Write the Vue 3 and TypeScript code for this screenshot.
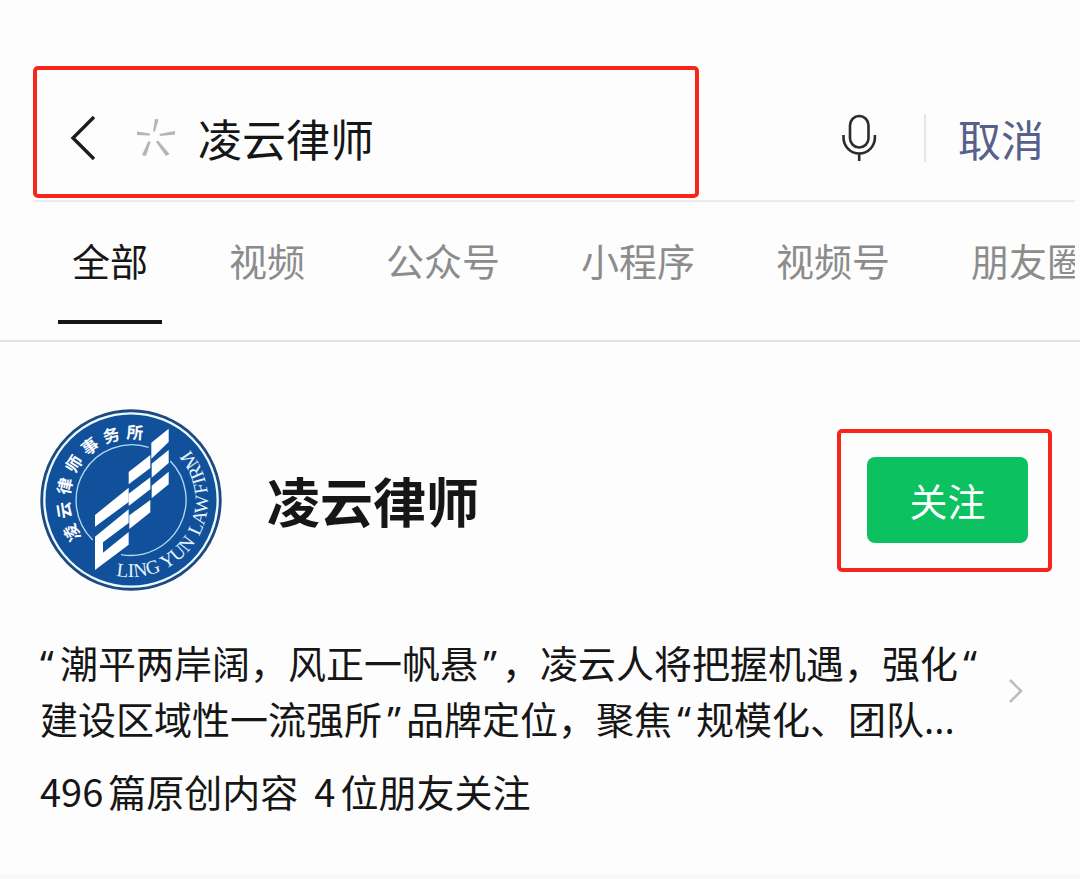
<script setup lang="ts">
import { ref } from 'vue'

const query = ref('凌云律师')
const tabs = ['全部', '视频', '公众号', '小程序', '视频号', '朋友圈']
const active = ref(0)

const sealChars = [...'凌云律师事务所'].map((char, i) => ({
  char,
  angle: -119 + i * 20.4,
}))

const sealWords = [
  { word: 'LING', offset: 0 },
  { word: 'YUN', offset: 150 },
  { word: 'LAW', offset: 294 },
  { word: 'FIRM', offset: 430 },
]
</script>

<template>
  <main class="page" lang="zh-CN">
    <header class="search-bar">
      <form class="search-box" @submit.prevent>
        <button class="icon-button" type="button" aria-label="返回">
          <svg width="28" height="46" viewBox="0 0 28 46" fill="none" stroke="#1c1c1c" stroke-width="3.4">
            <path d="M25 2 4 23l21 21" />
          </svg>
        </button>
        <svg class="spark" width="40" height="40" viewBox="0 0 40 40" fill="#b4b4b4" aria-hidden="true">
          <path d="M19 1l3.500 .5-3.500 12h-2z" />
          <path d="M1 13.500l13 2v2L1 17z" />
          <path d="M39 13v3.500l-15 1.500-.5-2z" />
          <path d="M12.500 23l2 1L10 38l-4-1z" />
          <path d="M20 24l2-1.500L33.500 36 30 38z" />
        </svg>
        <input v-model="query" class="query" type="text" aria-label="搜索" />
      </form>
      <div class="actions">
        <button class="icon-button" type="button" aria-label="语音输入">
          <svg width="36" height="48" viewBox="0 0 36 48" fill="none" stroke="#2b2b2b" stroke-width="2.600">
            <rect x="9" y="2" width="18.500" height="31.500" rx="9.250" />
            <path d="M2.500 21v2.500a15.700 16 0 0 0 31.400 0V21M18.200 39.500V47" />
          </svg>
        </button>
        <span class="divider"></span>
        <button class="cancel" type="button">取消</button>
      </div>
    </header>

    <nav class="tabs">
      <button
        v-for="(tab, i) in tabs"
        :key="tab"
        type="button"
        class="tab"
        :class="{ active: active === i }"
        @click="active = i"
      >{{ tab }}</button>
    </nav>

    <article class="account">
      <div class="profile">
        <svg class="seal" width="182" height="182" viewBox="29 27 546 546" role="img" aria-label="凌云律师事务所">
          <circle cx="302" cy="300" r="272" fill="#1d4a80" />
          <circle cx="302" cy="300" r="260" fill="#11509b" stroke="#eafaff" stroke-width="7" />
          <path d="M355 142A167 167 0 0 0 187 420M420 183A167 167 0 0 1 272 464" fill="none" stroke="#b4dcf0" stroke-width="4" />
          <g fill="#fff">
            <path d="M363 128 415 86V126L363 176Z" />
            <path d="M295 216 360 165V204L295 253Z" />
            <path d="M364 191 415 150V189L364 233Z" />
            <path d="M295 281 360 232V268L295 318Z" />
            <path d="M364 257 415 215V253L364 295Z" />
            <path d="M194 345 295 263V306L194 380Z" />
            <path d="M297 346 360 300V337L297 387Z" />
            <path d="M194 410 295 328V369L218 427V458L295 396V434L194 510Z" />
          </g>
          <g class="seal-cn" text-anchor="middle">
            <text
              v-for="item in sealChars"
              :key="item.char"
              x="302"
              y="116"
              :transform="`rotate(${item.angle} 302 300)`"
            >{{ item.char }}</text>
          </g>
          <path id="seal-arc" d="M257 527A231 231 0 0 0 465 137" fill="none" />
          <text v-for="item in sealWords" :key="item.word" class="seal-en">
            <textPath href="#seal-arc" :startOffset="item.offset">{{ item.word }}</textPath>
          </text>
        </svg>
        <h1 class="name">凌云律师</h1>
        <div class="follow-frame">
          <button class="follow" type="button">关注</button>
        </div>
      </div>

      <a class="summary" href="#">
        <span class="lines">
          <span class="line"><span class="mark lead">“</span>潮平两岸阔，风正一帆悬<span class="mark">”</span>，凌云人将把握机遇，强化<span class="mark">“</span></span>
          <span class="line">建设区域性一流强所<span class="mark">”</span>品牌定位，聚焦<span class="mark">“</span>规模化、团队<span class="dots">...</span></span>
        </span>
        <svg width="16" height="26" viewBox="0 0 16 26" fill="none" stroke="#bdbdbd" stroke-width="2.600" aria-hidden="true">
          <path d="M2 2l11 11L2 24" />
        </svg>
      </a>

      <p class="stats">
        <span><span class="count">496</span>篇原创内容</span>
        <span><span class="count">4</span>位朋友关注</span>
      </p>
    </article>
    <div class="footer-edge"></div>
  </main>
</template>

<style>
body {
  margin: 0;
  background: #fdfdfd;
}
</style>

<style scoped>
.page {
  display: flex;
  flex-direction: column;
  min-height: 100vh;
  box-sizing: border-box;
  padding-top: 66px;
  overflow: hidden;
  color: #161616;
  font-family: "Noto Sans CJK SC", sans-serif;
}

button {
  padding: 0;
  border: 0;
  background: none;
  font-family: inherit;
  cursor: pointer;
}

svg {
  display: block;
  flex: none;
}

.icon-button {
  display: flex;
}

.search-bar {
  display: flex;
  align-items: center;
  justify-content: space-between;
  margin: 0 5px 0 33px;
  padding-bottom: 2px;
  border-bottom: 2px solid #ececec;
}

.search-box {
  display: flex;
  align-items: center;
  flex: 0 1 666px;
  min-width: 0;
  box-sizing: border-box;
  height: 132px;
  padding: 12px 32px 0;
  border: 4px solid #f8251b;
  border-radius: 5px;
}

.spark {
  margin-left: 39px;
}

.query {
  flex: 1;
  width: 0;
  min-width: 0;
  height: 64px;
  margin-left: 22px;
  padding: 0;
  border: 0;
  outline: 0;
  background: none;
  color: #161616;
  font-family: inherit;
  font-size: 44px;
}

.actions {
  display: flex;
  align-items: center;
  padding: 12px 31px 0 0;
}

.divider {
  width: 2px;
  height: 48px;
  margin: 0 32px 0 47px;
  background: #e6e6e6;
}

.cancel {
  color: #56608a;
  font-size: 43px;
  line-height: 64px;
}

.tabs {
  display: flex;
  gap: 53px;
  height: 138px;
  margin-right: 5px;
  padding-left: 58px;
  overflow: hidden;
}

.tab {
  flex: none;
  box-sizing: border-box;
  height: 122px;
  padding: 0 14px 3px;
  border-bottom: 4px solid transparent;
  color: #8c8c8c;
  font-size: 38px;
}

.tab.active {
  border-color: #161616;
  color: #161616;
}

.account {
  flex: 1;
  padding: 67px 28px 0 40px;
  border-top: 2px solid #e2e2e2;
}

.profile {
  display: flex;
  align-items: center;
}

.name {
  flex: 1;
  margin: 0 0 0 45px;
  font-size: 53px;
  font-weight: 700;
  line-height: 72px;
}

.follow-frame {
  padding: 24px 20px 25px 26px;
  border: 4px solid #f8251b;
  border-radius: 5px;
}

.follow {
  width: 161px;
  height: 86px;
  border-radius: 8px;
  background: #0bc160;
  color: #fff;
  font-size: 38px;
}

.summary {
  display: flex;
  align-items: center;
  justify-content: space-between;
  margin-top: 43px;
  padding-right: 28px;
  color: inherit;
  text-decoration: none;
}

.line {
  display: block;
  font-size: 38px;
  line-height: 56px;
  white-space: nowrap;
}

.mark {
  display: inline-block;
  width: 24px;
  font-family: "Noto Sans", sans-serif;
  line-height: 1;
  text-align: center;
}

.mark.lead {
  width: 20px;
  text-align: left;
}

.dots {
  font-family: "Noto Sans", sans-serif;
}

.stats {
  display: flex;
  gap: 16px;
  margin: 16px 0 0;
  font-size: 38px;
  line-height: 56px;
}

.count {
  margin-right: 5px;
}

.seal-cn {
  fill: #fff;
  font-family: "Noto Sans CJK SC", sans-serif;
  font-size: 50px;
  font-weight: 700;
}

.seal-en {
  fill: #e4f4fb;
  font-family: "Liberation Serif", serif;
  font-size: 58px;
}

.footer-edge {
  height: 5px;
  background: #f9f9f9;
}
</style>
